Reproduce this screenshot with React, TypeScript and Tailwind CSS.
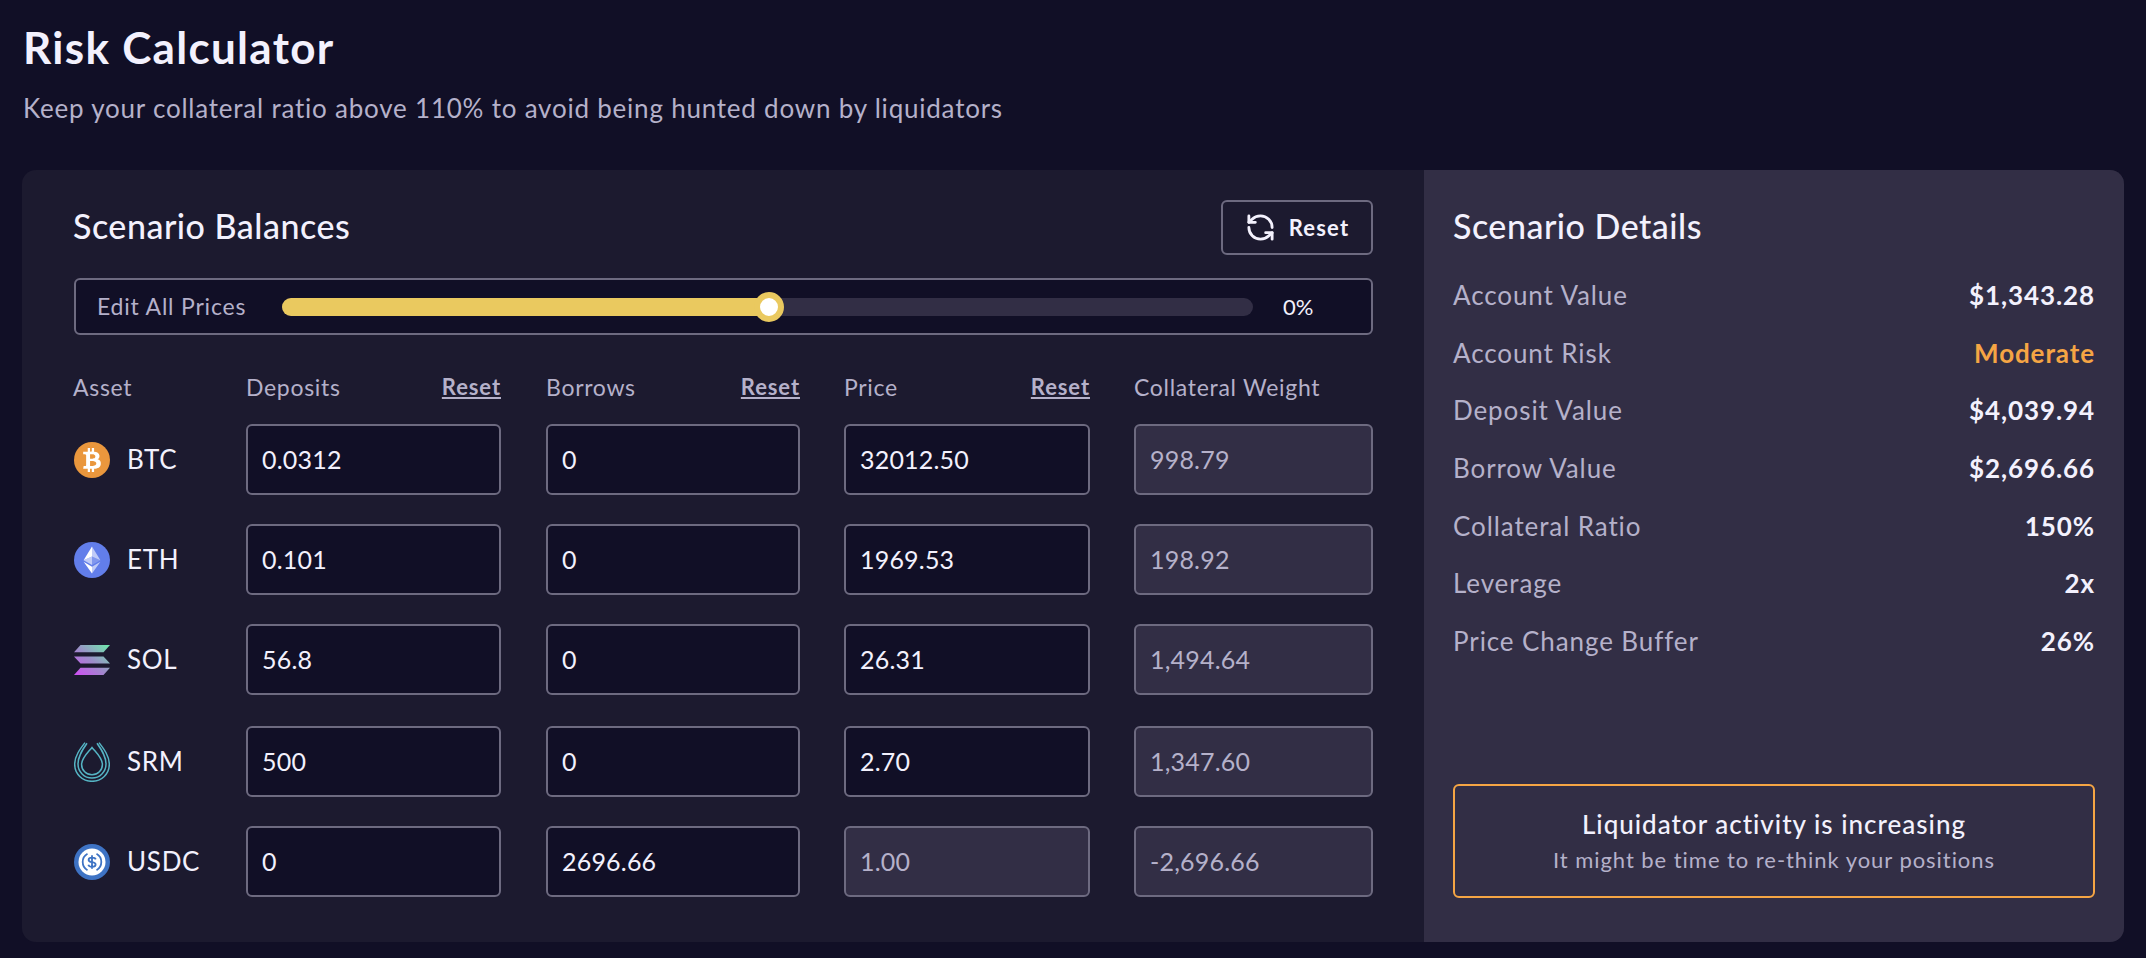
import { RefreshCcw } from "lucide-react";
import { FaBtc } from "react-icons/fa";

const BtcIcon = () => (
  <div className="flex h-9 w-9 items-center justify-center rounded-full bg-[#ea973d] text-white">
    <FaBtc size={24} />
  </div>
);

const EthIcon = () => (
  <svg viewBox="0 0 36 36" className="h-9 w-9">
    <circle cx="18" cy="18" r="18" fill="#627eea" />
    <path d="M18 4.5V14.5L26.4 18.3Z" fill="#fff" fillOpacity="0.6" />
    <path d="M18 4.5L9.6 18.3L18 14.5Z" fill="#fff" />
    <path d="M18 24.7V31.5L26.4 19.8Z" fill="#fff" fillOpacity="0.6" />
    <path d="M18 31.5V24.7L9.6 19.8Z" fill="#fff" />
    <path d="M18 23.1L26.4 18.3L18 14.5Z" fill="#fff" fillOpacity="0.2" />
    <path d="M9.6 18.3L18 23.1V14.5Z" fill="#fff" fillOpacity="0.6" />
  </svg>
);

const SolIcon = () => (
  <svg viewBox="0 0 36 30" className="h-[30px] w-9">
    <defs>
      <linearGradient id="solGrad" gradientUnits="userSpaceOnUse" x1="4" y1="32" x2="32" y2="-2">
        <stop offset="0" stopColor="#d04ff5" />
        <stop offset="0.5" stopColor="#9b8fc8" />
        <stop offset="1" stopColor="#6fe8ac" />
      </linearGradient>
    </defs>
    <path d="M6.5 0H36L29.5 7.2H0Z" fill="url(#solGrad)" />
    <path d="M0 11.4H29.5L36 18.6H6.5Z" fill="url(#solGrad)" />
    <path d="M6.5 22.8H36L29.5 30H0Z" fill="url(#solGrad)" />
  </svg>
);

const SrmIcon = () => (
  <svg viewBox="0 0 36 40" className="h-10 w-9" fill="none" stroke="#55b4c4" strokeWidth="1.5">
    <path d="M11 .6C6 7 .7 14 .7 22.3 .7 32 8.4 39.3 18 39.3S35.3 32 35.3 22.3C35.3 14 30 7 25 .6" />
    <path d="M13 1.2C8.5 7.5 4 14 4 22 4 29.8 10.2 36 18 36S32 29.8 32 22C32 14 27.5 7.5 23 1.2" />
    <path d="M18 5.5C13.5 11 7.6 16 7.6 22.4 7.6 28.2 12.2 32.7 18 32.7S28.4 28.2 28.4 22.4C28.4 16 22.5 11 18 5.5Z" />
  </svg>
);

const UsdcIcon = () => (
  <svg viewBox="0 0 36 36" className="h-9 w-9">
    <circle cx="18" cy="18" r="18" fill="#3e73c4" />
    <circle cx="18" cy="18" r="13.5" fill="#fff" />
    <path d="M13.5 9.8A9.4 9.4 0 0 0 13.5 26.2M22.5 9.8A9.4 9.4 0 0 1 22.5 26.2" fill="none" stroke="#3e73c4" strokeWidth="1.8" />
    <path d="M21.8 15.4C21.3 14.1 20 13.6 18 13.6 16 13.6 14.6 14.5 14.6 15.9 14.6 19.3 21.6 17 21.6 20.5 21.6 21.9 20.1 22.8 18 22.8 16 22.8 14.8 22 14.3 20.7M18 11.2V24.8" fill="none" stroke="#3e73c4" strokeWidth="1.8" />
  </svg>
);

type Row = {
  name: string;
  icon: React.ReactNode;
  deposit: string;
  borrow: string;
  price: string;
  weight: string;
  priceOff?: boolean;
  top: string;
};

const rows: Row[] = [
  { name: "BTC", icon: <BtcIcon />, deposit: "0.0312", borrow: "0", price: "32012.50", weight: "998.79", top: "mt-[23px]" },
  { name: "ETH", icon: <EthIcon />, deposit: "0.101", borrow: "0", price: "1969.53", weight: "198.92", top: "mt-[29px]" },
  { name: "SOL", icon: <SolIcon />, deposit: "56.8", borrow: "0", price: "26.31", weight: "1,494.64", top: "mt-[29px]" },
  { name: "SRM", icon: <SrmIcon />, deposit: "500", borrow: "0", price: "2.70", weight: "1,347.60", top: "mt-[31px]" },
  { name: "USDC", icon: <UsdcIcon />, deposit: "0", borrow: "2696.66", price: "1.00", weight: "-2,696.66", priceOff: true, top: "mt-[29px]" },
];

const details: [string, string, string][] = [
  ["Account Value", "$1,343.28", "text-[#f3f1fd]"],
  ["Account Risk", "Moderate", "text-[#f5a544]"],
  ["Deposit Value", "$4,039.94", "text-[#f3f1fd]"],
  ["Borrow Value", "$2,696.66", "text-[#f3f1fd]"],
  ["Collateral Ratio", "150%", "text-[#f3f1fd]"],
  ["Leverage", "2x", "text-[#f3f1fd]"],
  ["Price Change Buffer", "26%", "text-[#f3f1fd]"],
];

const Field = ({ value, off, className }: { value: string; off?: boolean; className: string }) => (
  <div
    className={`flex h-[71px] items-center rounded-[6px] border-2 border-[#6d6a80] px-[14px] text-[25px] tracking-[0.2px] ${className} ${
      off ? "bg-[#322e45] text-[#b5b1ca]" : "bg-[#110f26] text-[#f3f1fd]"
    }`}
  >
    {value}
  </div>
);

const HeadReset = () => (
  <span className="text-[22px] font-bold tracking-[0.9px] text-[#b5b1ca] underline underline-offset-2">Reset</span>
);

export default function App() {
  return (
    <div className="h-[958px] w-full overflow-hidden bg-[#110f26] font-['Lato',sans-serif] text-[#f3f1fd]">
      <div className="px-[23px] pt-[21px]">
        <h1 className="text-[44px] leading-[52px] font-bold tracking-[1.3px]">Risk Calculator</h1>
        <p className="mt-[18px] text-[26px] leading-[34px] tracking-[0.78px] text-[#b5b1ca]">
          Keep your collateral ratio above 110% to avoid being hunted down by liquidators
        </p>
      </div>
      <div className="mx-[22px] mt-[45px] flex h-[772px] overflow-hidden rounded-[14px] bg-[#1c1a2f]">
        <div className="w-[1402px] shrink-0 pl-[52px] pr-[51px] pt-[30px]">
          <div className="flex h-[55px] items-center justify-between">
            <h2 className="-ml-px pb-[4px] text-[34px] font-medium tracking-[0.5px]">Scenario Balances</h2>
            <button className="flex h-[55px] w-[152px] items-center justify-center gap-[13px] rounded-[6px] border-2 border-[#6d6a80] text-[22px] font-bold tracking-[1.2px]">
              <RefreshCcw size={31} strokeWidth={2.2} />
              Reset
            </button>
          </div>
          <div className="mt-[23px] flex h-[57px] items-center rounded-[6px] border-2 border-[#6d6a80] bg-[#110f26] pl-[21px]">
            <span className="w-[185px] shrink-0 text-[23px] tracking-[0.8px] text-[#b5b1ca]">Edit All Prices</span>
            <div className="relative h-[18px] w-[971px] shrink-0 rounded-full bg-[#322e45]">
              <div className="h-full w-[487px] rounded-full bg-[#eac95f]" />
              <div className="absolute left-[472px] top-[-6px] h-[30px] w-[30px] rounded-full border-[6px] border-[#eac95f] bg-white" />
            </div>
            <span className="ml-[30px] text-[22px]">0%</span>
          </div>
          <div className="mt-[38px] flex h-[28px] items-center text-[23px] tracking-[0.7px] text-[#b5b1ca]">
            <span className="-ml-px w-[173px] shrink-0">Asset</span>
            <div className="flex w-[255px] shrink-0 justify-between">
              <span>Deposits</span>
              <HeadReset />
            </div>
            <div className="ml-[45px] flex w-[254px] shrink-0 justify-between">
              <span>Borrows</span>
              <HeadReset />
            </div>
            <div className="ml-[44px] flex w-[246px] shrink-0 justify-between">
              <span>Price</span>
              <HeadReset />
            </div>
            <span className="ml-[44px]">Collateral Weight</span>
          </div>
          {rows.map((r) => (
            <div key={r.name} className={`flex items-center ${r.top}`}>
              <div className="flex w-[172px] shrink-0 items-center gap-[17px] text-[26px] tracking-[0.7px]">
                <div className="flex w-9 shrink-0 items-center justify-center">{r.icon}</div>
                <span>{r.name}</span>
              </div>
              <Field value={r.deposit} className="w-[255px] shrink-0" />
              <Field value={r.borrow} className="ml-[45px] w-[254px] shrink-0" />
              <Field value={r.price} off={r.priceOff} className="ml-[44px] w-[246px] shrink-0" />
              <Field value={r.weight} off className="ml-[44px] w-[239px] shrink-0" />
            </div>
          ))}
        </div>
        <div className="flex flex-1 flex-col bg-[#322e45] px-[29px] pt-[30px] pb-[44px]">
          <h2 className="flex h-[55px] items-center pb-[4px] text-[34px] font-medium tracking-[0.5px]">Scenario Details</h2>
          <div className="mt-[12px] flex flex-col">
            {details.map(([label, value, color]) => (
              <div key={label} className="flex h-[57.6px] items-center justify-between text-[26px] tracking-[0.9px]">
                <span className="text-[#b5b1ca]">{label}</span>
                <span className={`font-bold ${color}`}>{value}</span>
              </div>
            ))}
          </div>
          <div className="mt-auto flex h-[114px] flex-col items-center justify-center rounded-[6px] border-2 border-[#f5a544] pt-[2px] text-center">
            <span className="text-[26px] leading-[35px] font-medium tracking-[1px]">Liquidator activity is increasing</span>
            <span className="text-[22px] leading-[35px] tracking-[0.95px] text-[#b5b1ca]">It might be time to re-think your positions</span>
          </div>
        </div>
      </div>
    </div>
  );
}
